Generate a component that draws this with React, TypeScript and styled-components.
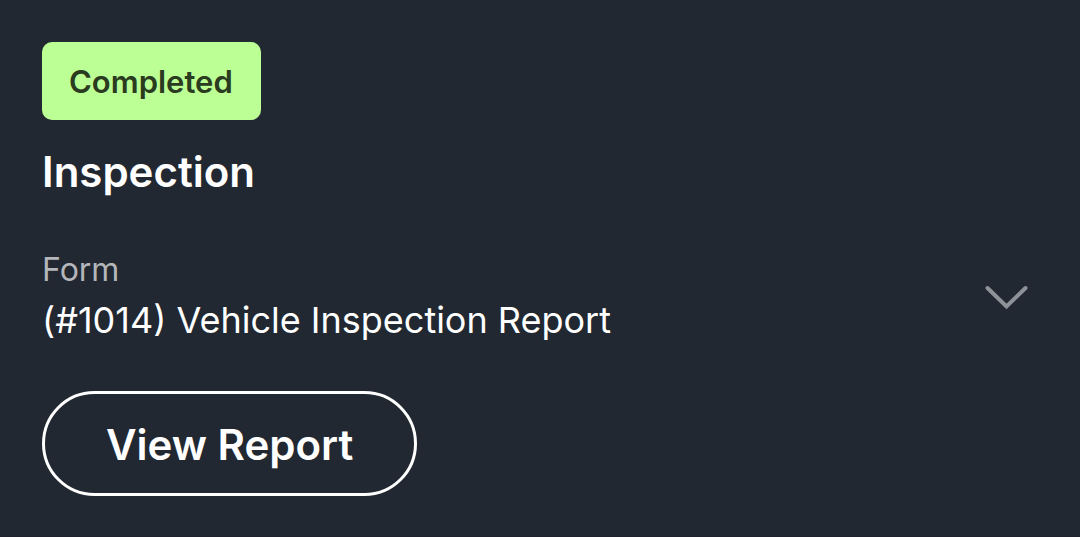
import React from "react";
import styled, { createGlobalStyle } from "styled-components";

const GlobalStyle = createGlobalStyle`
  * { box-sizing: border-box; }
  body {
    margin: 0;
    background: #212831;
    color: #ffffff;
    font-family: Inter, "Liberation Sans", sans-serif;
  }
`;

const Card = styled.article`
  display: flex;
  align-items: center;
  justify-content: space-between;
  min-height: 100vh;
  padding: 42px 50px 40px 42px;
  border-bottom: 1px solid #20222e;
`;

const Details = styled.div`
  display: flex;
  flex-direction: column;
  align-items: flex-start;
`;

const Badge = styled.span`
  padding: 21px 28px 19px 27px;
  border-radius: 10px;
  background: #bcff94;
  color: #2a3b20;
  font-size: 31px;
  font-weight: 600;
  line-height: 38px;
`;

const Title = styled.h2`
  margin: 24px 0 48px;
  font-size: 42px;
  font-weight: 600;
  line-height: 56px;
`;

const Label = styled.span`
  color: #b4b6ba;
  font-size: 32px;
  line-height: 44px;
`;

const Value = styled.span`
  margin-bottom: 43px;
  font-size: 36px;
  line-height: 56px;
`;

const ReportButton = styled.button`
  padding: 26px 61px 23px;
  border: 3px solid #ffffff;
  border-radius: 53px;
  background: transparent;
  color: inherit;
  font: inherit;
  font-size: 42px;
  font-weight: 600;
  line-height: 50px;
  cursor: pointer;
`;

const ExpandButton = styled.button`
  display: flex;
  margin-top: 58px;
  padding: 0;
  border: 0;
  background: transparent;
  color: #8d9198;
  cursor: pointer;
`;

export default function App() {
  return (
    <>
      <GlobalStyle />
      <Card>
        <Details>
          <Badge>Completed</Badge>
          <Title>Inspection</Title>
          <Label>Form</Label>
          <Value>(#1014) Vehicle Inspection Report</Value>
          <ReportButton type="button">View Report</ReportButton>
        </Details>
        <ExpandButton type="button" aria-label="Expand inspection">
          <svg width="46" height="28" viewBox="0 0 46 28" fill="none" aria-hidden="true">
            <path d="M3.5 4L22.5 22.5L41.5 4" stroke="currentColor" strokeWidth="4" strokeLinecap="round" strokeLinejoin="miter" />
          </svg>
        </ExpandButton>
      </Card>
    </>
  );
}
